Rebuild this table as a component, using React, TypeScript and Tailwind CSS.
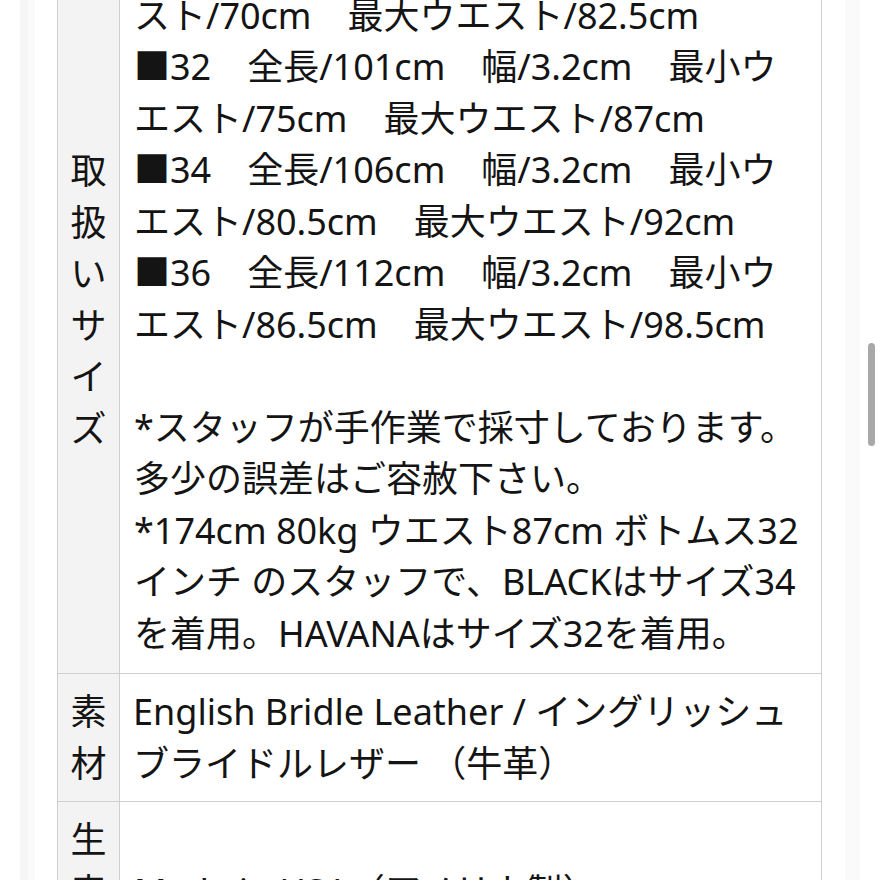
import React from "react";

const lines1 = [
  "■30　全長/96cm　幅/3.2cm　最小ウエ",
  "スト/70cm　最大ウエスト/82.5cm",
  "■32　全長/101cm　幅/3.2cm　最小ウ",
  "エスト/75cm　最大ウエスト/87cm",
  "■34　全長/106cm　幅/3.2cm　最小ウ",
  "エスト/80.5cm　最大ウエスト/92cm",
  "■36　全長/112cm　幅/3.2cm　最小ウ",
  "エスト/86.5cm　最大ウエスト/98.5cm",
  "\u00a0",
  "*スタッフが手作業で採寸しております。",
  "多少の誤差はご容赦下さい。",
  "*174cm 80kg ウエスト87cm ボトムス32",
  "インチ のスタッフで、BLACKはサイズ34",
  "を着用。HAVANAはサイズ32を着用。",
];

function Label({ chars }: { chars: string[] }) {
  return (
    <td className="w-[62px] border border-[#cfcfcf] bg-[#f3f3f3] align-middle py-[12px]">
      <div className="flex flex-col items-center">
        {chars.map((c, i) => (
          <span key={i} className="block">
            {c}
          </span>
        ))}
      </div>
    </td>
  );
}

function Lines({ lines }: { lines: string[] }) {
  return (
    <div className="flex flex-col">
      {lines.map((l, i) => (
        <div key={i} className="whitespace-pre">
          {l}
        </div>
      ))}
    </div>
  );
}

export default function App() {
  return (
    <div
      className="relative h-[880px] w-[880px] overflow-hidden bg-white text-[#141414] text-[36px] leading-[51.5px]"
      style={{ fontFamily: '"Noto Sans", "Noto Sans CJK JP", sans-serif' }}
    >
      <div className="flex h-full">
        <div className="w-[20px] shrink-0 bg-white" />
        <div className="w-[8px] shrink-0 bg-[#f6f6f6]" />
        <div className="w-[7px] shrink-0 bg-[#fafafa]" />
        <div className="w-[22px] shrink-0 bg-white" />
        <div className="w-[765px] shrink-0">
          <table className="-mt-[75px] w-[765px] table-fixed border-collapse">
            <colgroup>
              <col className="w-[62px]" />
              <col />
            </colgroup>
            <tbody>
              <tr>
                <Label chars={["取", "扱", "い", "サ", "イ", "ズ"]} />
                <td className="overflow-hidden border border-[#cfcfcf] pl-[14px] pr-[2px] pt-[12px] pb-[14px] align-middle">
                  <Lines lines={lines1} />
                </td>
              </tr>
              <tr>
                <Label chars={["素", "材"]} />
                <td className="overflow-hidden border border-[#cfcfcf] pl-[13px] pr-[2px] py-[12px] align-middle">
                  <Lines
                    lines={[
                      "English Bridle Leather / イングリッシュ",
                      "ブライドルレザー （牛革）",
                    ]}
                  />
                </td>
              </tr>
              <tr>
                <Label chars={["生", "産", "国"]} />
                <td className="overflow-hidden border border-[#cfcfcf] pl-[14px] pr-[2px] py-[12px] align-middle">
                  <Lines lines={["Made in USA（アメリカ製）"]} />
                </td>
              </tr>
            </tbody>
          </table>
        </div>
        <div className="w-[23px] shrink-0 bg-white" />
        <div className="w-[15px] shrink-0 bg-[#fafafa]" />
        <div className="flex w-[20px] shrink-0 flex-col bg-white pt-[343px] pl-[8px]">
          <div className="h-[103px] w-[7px] rounded-full bg-[#a8a8a8]" />
        </div>
      </div>
    </div>
  );
}
